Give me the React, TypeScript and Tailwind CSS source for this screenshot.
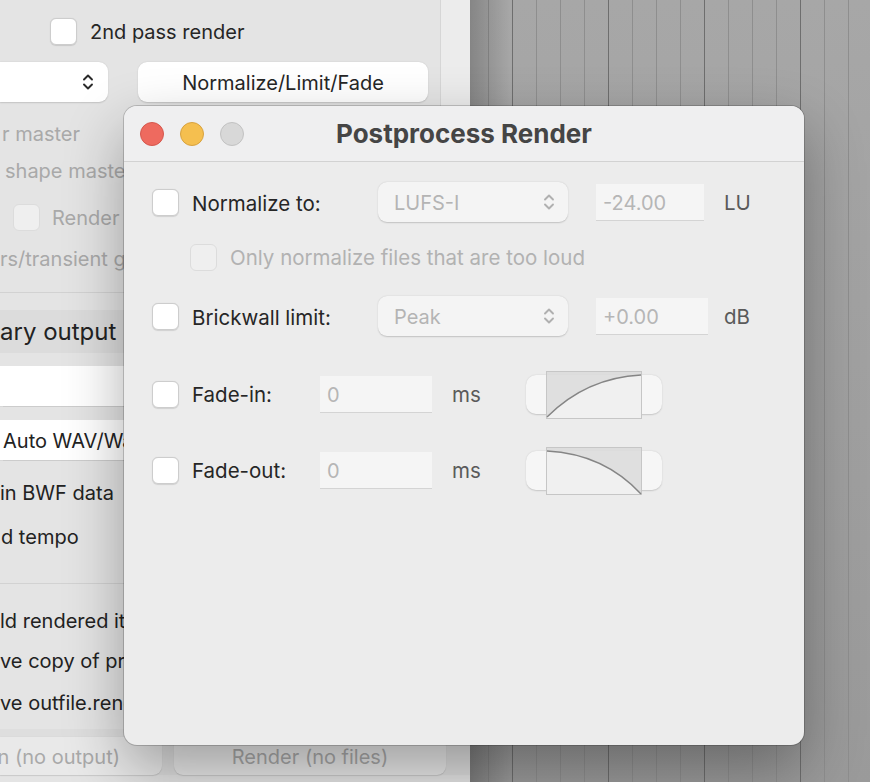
import React from 'react';

const UpDown = ({ className }: { className: string }) => (
  <svg width="14" height="22" viewBox="0 0 14 22" fill="none" className={className}>
    <path d="M3 8.5 7 4.5l4 4" stroke="currentColor" strokeWidth="1.9" strokeLinecap="round" strokeLinejoin="round" />
    <path d="M3 13.5l4 4 4-4" stroke="currentColor" strokeWidth="1.9" strokeLinecap="round" strokeLinejoin="round" />
  </svg>
);

const Check: React.FC<{ disabled?: boolean }> = ({ disabled }) => (
  <div
    className={`w-[27px] h-[27px] shrink-0 rounded-[6px] border ${disabled
      ? 'bg-[#efefef] border-[#dcdcdc]'
      : 'bg-white border-[#cdcdcd] shadow-[0_0.5px_1px_rgba(0,0,0,0.12)]'
      }`}
  />
);

const Select: React.FC<{ value: string }> = ({ value }) => (
  <div className="w-[190px] h-[40px] shrink-0 rounded-[9px] bg-[#f4f4f4] shadow-[0_0.5px_1.5px_rgba(0,0,0,0.18)] flex items-center justify-between pl-[16px] pr-[12px]">
    <span className="text-[20px] text-[#b4b4b4] pt-[2px]">{value}</span>
    <UpDown className="text-[#b0b0b0]" />
  </div>
);

const Field: React.FC<{ value: string; w: string }> = ({ value, w }) => (
  <div className={`${w} h-[37px] shrink-0 bg-[#f5f5f5] border-b border-[#d4d4d4] flex items-center pl-[7px]`}>
    <span className="text-[20px] text-[#b6b6b6] pt-[2px]">{value}</span>
  </div>
);

const FadeShape: React.FC<{ out?: boolean }> = ({ out }) => (
  <div className="relative w-[136px] h-[39px] shrink-0 rounded-[10px] bg-[#f6f6f6] shadow-[0_0.5px_1.5px_rgba(0,0,0,0.16)]">
    <svg width="96" height="48" viewBox="0 0 96 48" className="absolute left-[20px] top-[-4px]">
      <rect x="0.5" y="0.5" width="95" height="47" fill="#dadada" fillOpacity="0.85" stroke="#c6c6c6" />
      {out ? (
        <>
          <path d="M1 4 C40 6 70 20 95 47 L1 47 Z" fill="#f2f2f2" fillOpacity="0.9" />
          <path d="M1 4 C40 6 70 20 95 47" fill="none" stroke="#858585" strokeWidth="1.4" />
        </>
      ) : (
        <>
          <path d="M1 46 C25 22 55 6 95 4 L95 47 L1 47 Z" fill="#f2f2f2" fillOpacity="0.9" />
          <path d="M1 46 C25 22 55 6 95 4" fill="none" stroke="#858585" strokeWidth="1.4" />
        </>
      )}
    </svg>
  </div>
);

const stripes = Array.from({ length: 16 }, (_, i) => i);

export default function App() {
  return (
    <div className="relative w-[870px] h-[782px] overflow-hidden flex bg-[#a6a6a6] font-[family-name:Inter,'Liberation_Sans',sans-serif] text-[#262626]">
      {/* main render window behind */}
      <div className="w-[470px] h-full shrink-0 flex flex-col bg-[#e4e4e4]">
        <div className="flex h-[106px]">
          <div className="w-[440px] flex flex-col">
            <div className="h-[62px] flex items-center pl-[50px] gap-[13px]">
              <Check />
              <span className="text-[20px] pt-[1px]">2nd pass render</span>
            </div>
            <div className="h-[40px] flex items-center">
              <div className="w-[108px] h-[40px] rounded-r-[9px] bg-white shadow-[0_0.5px_1.5px_rgba(0,0,0,0.15)] flex items-center justify-end pr-[13px]">
                <UpDown className="text-[#2a2a2a]" />
              </div>
              <div className="ml-[30px] w-[290px] h-[40px] rounded-[9px] bg-white shadow-[0_0.5px_1.5px_rgba(0,0,0,0.15)] flex items-center justify-center">
                <span className="text-[20px] pt-[1px]">Normalize/Limit/Fade</span>
              </div>
            </div>
          </div>
          <div className="flex-1 border-l border-[#d6d6d6] bg-[#ececec]" />
        </div>
        <div className="flex flex-col whitespace-nowrap text-[20px] text-[#a9a9a9]">
          <div className="h-[38px] mt-[9px] flex items-center pl-[2px]">r master</div>
          <div className="h-[38px] mt-[-1px] flex items-center pl-[5px]">shape master</div>
          <div className="h-[38px] mt-[8px] flex items-center pl-[13px] gap-[12px]">
            <Check disabled />
            <span className="pt-[2px]">Render stems</span>
          </div>
          <div className="h-[38px] mt-[4px] flex items-center">rs/transient guides</div>
          <div className="h-[15px] border-b border-[#d2d2d2]" />
          <div className="h-[43px] mt-[17px] bg-[#dcdcdc] flex items-center text-[24px] text-[#222]">ary output</div>
          <div className="h-[40px] mt-[13px] bg-white shadow-[0_0.5px_1px_rgba(0,0,0,0.1)]" />
          <div className="h-[40px] mt-[14px] bg-white shadow-[0_0.5px_1px_rgba(0,0,0,0.1)] flex items-center pt-[2px] pl-[3px] text-[#222]">Auto WAV/Wave64</div>
          <div className="h-[38px] mt-[14px] flex items-center text-[#222]">in BWF data</div>
          <div className="h-[38px] mt-[6px] flex items-center pl-[1px] text-[#222]">d tempo</div>
          <div className="h-[28px] border-b border-[#d2d2d2]" />
          <div className="h-[38px] mt-[18px] flex items-center text-[#222]">ld rendered items</div>
          <div className="h-[38px] mt-[2px] flex items-center text-[#222]">ve copy of project</div>
          <div className="h-[38px] mt-[4px] flex items-center text-[#222]">ve outfile.render</div>
          <div className="flex-1 mt-[7px] bg-[#dedede] flex items-start pt-[8px] gap-[12px]">
            <div className="w-[162px] h-[38px] rounded-r-[9px] bg-[#e9e9e9] shadow-[0_0.5px_1px_rgba(0,0,0,0.12)] flex items-center justify-end pr-[42px] pt-[1px]">
              n (no output)
            </div>
            <div className="w-[272px] h-[38px] rounded-[9px] bg-[#e9e9e9] shadow-[0_0.5px_1px_rgba(0,0,0,0.12)] flex items-center justify-center pt-[1px]">
              Render (no files)
            </div>
          </div>
        </div>
      </div>

      {/* arrange view stripes */}
      <div className="relative flex-1 flex bg-gradient-to-b from-[#a7a7a7] to-[#9a9a9a]">
        <div className="w-[18px] shrink-0" />
        {stripes.map((i) => (
          <div
            key={i}
            className={`w-[24px] shrink-0 border-l ${i % 4 === 1 ? 'border-[#6e6e6e]' : 'border-[#8e8e8e]'}`}
          />
        ))}
        <div className="absolute inset-y-0 left-0 w-[40px] bg-gradient-to-r from-black/20 to-transparent" />
      </div>

      {/* Postprocess Render dialog */}
      <div className="absolute left-[124px] top-[106px] w-[680px] h-[639px] rounded-[13px] overflow-hidden bg-[#ececec] shadow-[0_24px_60px_rgba(0,0,0,0.32),0_0_0_1px_rgba(0,0,0,0.18)]">
        <div className="h-[56px] grid grid-cols-[1fr_auto_1fr] items-center bg-[#efeff0] border-b border-[#d2d2d2]">
          <div className="flex items-center gap-[16px] pl-[16px]">
            <div className="w-[24px] h-[24px] rounded-full bg-[#ee6a5f] border border-[#d5574d]" />
            <div className="w-[24px] h-[24px] rounded-full bg-[#f5bf4f] border border-[#d8a23f]" />
            <div className="w-[24px] h-[24px] rounded-full bg-[#d8d8d8] border border-[#c2c2c2]" />
          </div>
          <span className="text-[26px] font-bold text-[#454545]">Postprocess Render</span>
          <div />
        </div>

        <div className="flex flex-col pl-[28px] pt-[20px] text-[20.5px]">
          <div className="h-[40px] flex items-center">
            <Check />
            <span className="ml-[13px] w-[186px] shrink-0 pt-[4px]">Normalize to:</span>
            <Select value="LUFS-I" />
            <div className="ml-[28px]"><Field value="-24.00" w="w-[108px]" /></div>
            <span className="ml-[20px] text-[#5a5a5a] pt-[3px]">LU</span>
          </div>

          <div className="h-[28px] mt-[21px] flex items-center pl-[38px]">
            <Check disabled />
            <span className="ml-[13px] text-[#b2b2b2] pt-[3px]">Only normalize files that are too loud</span>
          </div>

          <div className="h-[40px] mt-[25px] flex items-center">
            <Check />
            <span className="ml-[13px] w-[186px] shrink-0 pt-[4px]">Brickwall limit:</span>
            <Select value="Peak" />
            <div className="ml-[28px]"><Field value="+0.00" w="w-[112px]" /></div>
            <span className="ml-[16px] text-[#5a5a5a] pt-[3px]">dB</span>
          </div>

          <div className="h-[40px] mt-[38px] flex items-center">
            <Check />
            <span className="ml-[13px] w-[128px] shrink-0 pt-[3px]">Fade-in:</span>
            <Field value="0" w="w-[112px]" />
            <span className="ml-[20px] w-[74px] shrink-0 text-[#5a5a5a] pt-[3px]">ms</span>
            <FadeShape />
          </div>

          <div className="h-[40px] mt-[36px] flex items-center">
            <Check />
            <span className="ml-[13px] w-[128px] shrink-0 pt-[3px]">Fade-out:</span>
            <Field value="0" w="w-[112px]" />
            <span className="ml-[20px] w-[74px] shrink-0 text-[#5a5a5a] pt-[3px]">ms</span>
            <FadeShape out />
          </div>
        </div>
      </div>
    </div>
  );
}
